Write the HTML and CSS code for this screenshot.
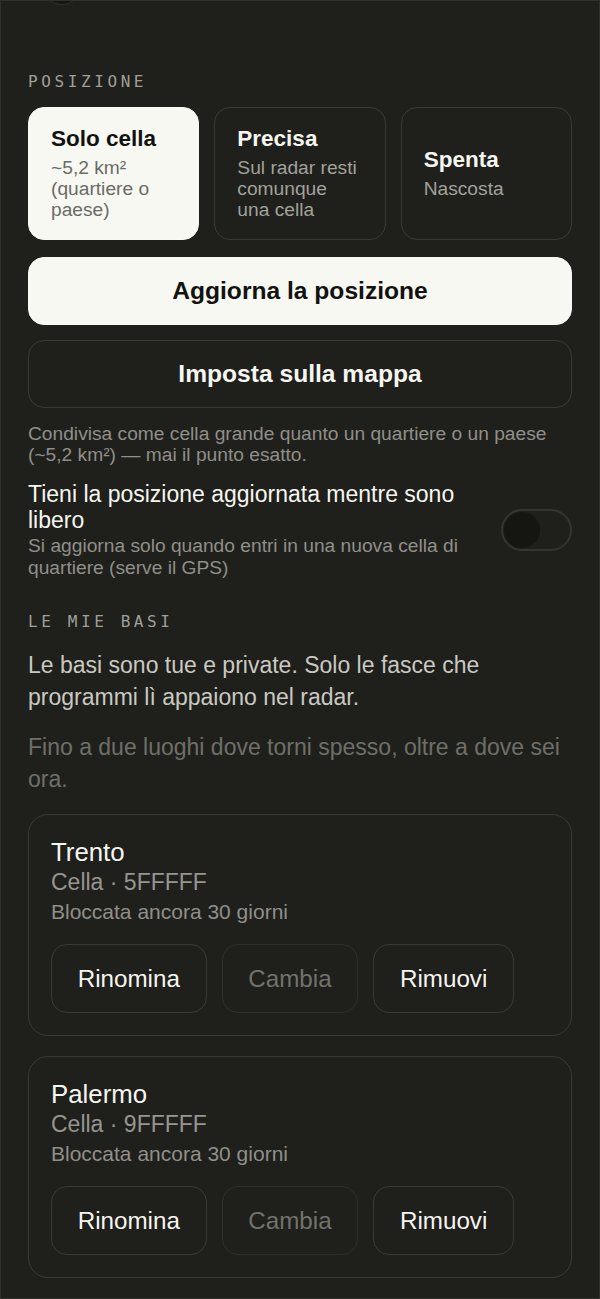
FILE: index.html
```html
<!DOCTYPE html>
<html lang="it">
<head>
<meta charset="utf-8">
<title>Posizione</title>
<link rel="stylesheet" href="styles.css">
</head>
<body>
<div class="screen">
  <div class="peek"></div>

  <h2 class="label label-first">Posizione</h2>

  <div class="options">
    <div class="option selected">
      <div class="opt-title">Solo cella</div>
      <div class="opt-sub">~5,2 km² (quartiere o paese)</div>
    </div>
    <div class="option">
      <div class="opt-title">Precisa</div>
      <div class="opt-sub">Sul radar resti comunque una cella</div>
    </div>
    <div class="option">
      <div class="opt-title">Spenta</div>
      <div class="opt-sub">Nascosta</div>
    </div>
  </div>

  <button class="btn btn-primary">Aggiorna la posizione</button>
  <button class="btn btn-secondary">Imposta sulla mappa</button>

  <p class="help">Condivisa come cella grande quanto un quartiere o un paese (~5,2 km²) — mai il punto esatto.</p>

  <div class="toggle-row">
    <div class="toggle-text">
      <div class="toggle-title">Tieni la posizione aggiornata mentre sono libero</div>
      <div class="toggle-sub">Si aggiorna solo quando entri in una nuova cella di quartiere (serve il GPS)</div>
    </div>
    <div class="switch"><span class="knob"></span></div>
  </div>

  <h2 class="label label-second">Le mie basi</h2>

  <p class="lead">Le basi sono tue e private. Solo le fasce che programmi lì appaiono nel radar.</p>
  <p class="note">Fino a due luoghi dove torni spesso, oltre a dove sei ora.</p>

  <div class="base">
    <div class="base-name">Trento</div>
    <div class="base-cell">Cella · 5FFFFF</div>
    <div class="base-lock">Bloccata ancora 30 giorni</div>
    <div class="base-actions">
      <button class="act">Rinomina</button>
      <button class="act act-disabled">Cambia</button>
      <button class="act">Rimuovi</button>
    </div>
  </div>

  <div class="base">
    <div class="base-name">Palermo</div>
    <div class="base-cell">Cella · 9FFFFF</div>
    <div class="base-lock">Bloccata ancora 30 giorni</div>
    <div class="base-actions">
      <button class="act">Rinomina</button>
      <button class="act act-disabled">Cambia</button>
      <button class="act">Rimuovi</button>
    </div>
  </div>
</div>
</body>
</html>
```

FILE: styles.css
```css
* { box-sizing: border-box; }

html, body {
  margin: 0;
  padding: 0;
  background: #1f1f1b;
}

body {
  font-family: "Liberation Sans", Arial, sans-serif;
  color: #f4f4ef;
}

.screen {
  min-height: 1299px;
  border: 1px solid #30302c;
  padding: 0 27px 20px;
  background: #1f1f1b;
  overflow: hidden;
  display: flex;
  flex-direction: column;
}

.peek {
  width: 40px;
  height: 40px;
  margin: -36px 0 0 14px;
  border-radius: 50%;
  background: #151511;
  border: 1px solid #2e2e2a;
  flex: none;
}

.label {
  margin: 0;
  font-family: "DejaVu Sans Mono", "Liberation Mono", monospace;
  font-weight: normal;
  font-size: 16px;
  line-height: 20px;
  letter-spacing: 3.6px;
  text-transform: uppercase;
  color: #a09f99;
}

.label-first { margin-top: 67px; margin-bottom: 15px; }
.label-second { margin-top: 33px; }

.options {
  display: grid;
  grid-template-columns: repeat(3, 1fr);
  gap: 15px;
}

.option {
  border: 1px solid #3a3a36;
  border-radius: 16px;
  padding: 18px 22px;
  display: flex;
  flex-direction: column;
  justify-content: center;
}

.option.selected {
  background: #f8f8f3;
  border-color: #f8f8f3;
}

.opt-title {
  font-size: 22.5px;
  line-height: 26px;
  font-weight: bold;
  color: #f6f6f1;
}

.opt-sub {
  margin-top: 5px;
  font-size: 19.2px;
  line-height: 21.2px;
  color: #a2a29c;
}

.selected .opt-title { color: #121210; }
.selected .opt-sub { color: #6b6b65; }

.btn {
  display: block;
  width: 100%;
  height: 68px;
  border-radius: 16px;
  font-family: "Liberation Sans", Arial, sans-serif;
  font-size: 24.6px;
  font-weight: bold;
  padding: 0;
  cursor: pointer;
}

.btn-primary {
  margin-top: 17px;
  background: #f8f8f3;
  border: 1px solid #f8f8f3;
  color: #121210;
}

.btn-secondary {
  margin-top: 15px;
  background: transparent;
  border: 1px solid #3a3a36;
  color: #f6f6f1;
}

.help {
  margin: 15px 0 0;
  font-size: 19.2px;
  line-height: 21.5px;
  color: #908f89;
}

.toggle-row {
  margin-top: 15px;
  display: flex;
  align-items: center;
  gap: 16px;
}

.toggle-text { flex: 1; }

.toggle-title {
  font-size: 23px;
  line-height: 26px;
  color: #f6f6f1;
}

.toggle-sub {
  margin-top: 2.5px;
  font-size: 19.2px;
  line-height: 22px;
  color: #908f89;
}

.switch {
  flex: none;
  width: 71px;
  height: 42px;
  border: 2px solid #343430;
  border-radius: 21px;
  padding: 1px;
  display: flex;
  align-items: center;
}

.knob {
  width: 36px;
  height: 36px;
  border-radius: 50%;
  background: #151511;
}

.lead {
  margin: 17px 0 0;
  font-size: 23px;
  line-height: 32px;
  color: #c9c9c2;
}

.note {
  margin: 18px 0 0;
  font-size: 23px;
  line-height: 32px;
  color: #6f6f69;
}

.base {
  margin-top: 19px;
  border: 1px solid #3a3a36;
  border-radius: 20px;
  padding: 22px 22px 22px;
}

.base + .base { margin-top: 20px; }

.base-name {
  font-size: 25.8px;
  line-height: 30px;
  color: #f6f6f1;
}

.base-cell {
  font-size: 23px;
  line-height: 30px;
  color: #96958f;
}

.base-lock {
  font-size: 21px;
  line-height: 30px;
  color: #908f89;
}

.base-actions {
  margin-top: 17px;
  display: flex;
  gap: 15px;
}

.act {
  height: 69px;
  padding: 0 25.7px;
  border: 1px solid #3a3a36;
  border-radius: 16px;
  background: transparent;
  color: #f6f6f1;
  font-family: "Liberation Sans", Arial, sans-serif;
  font-size: 24.2px;
  cursor: pointer;
}

.act-disabled {
  border-color: #2e2e2a;
  color: #72726c;
}
```
